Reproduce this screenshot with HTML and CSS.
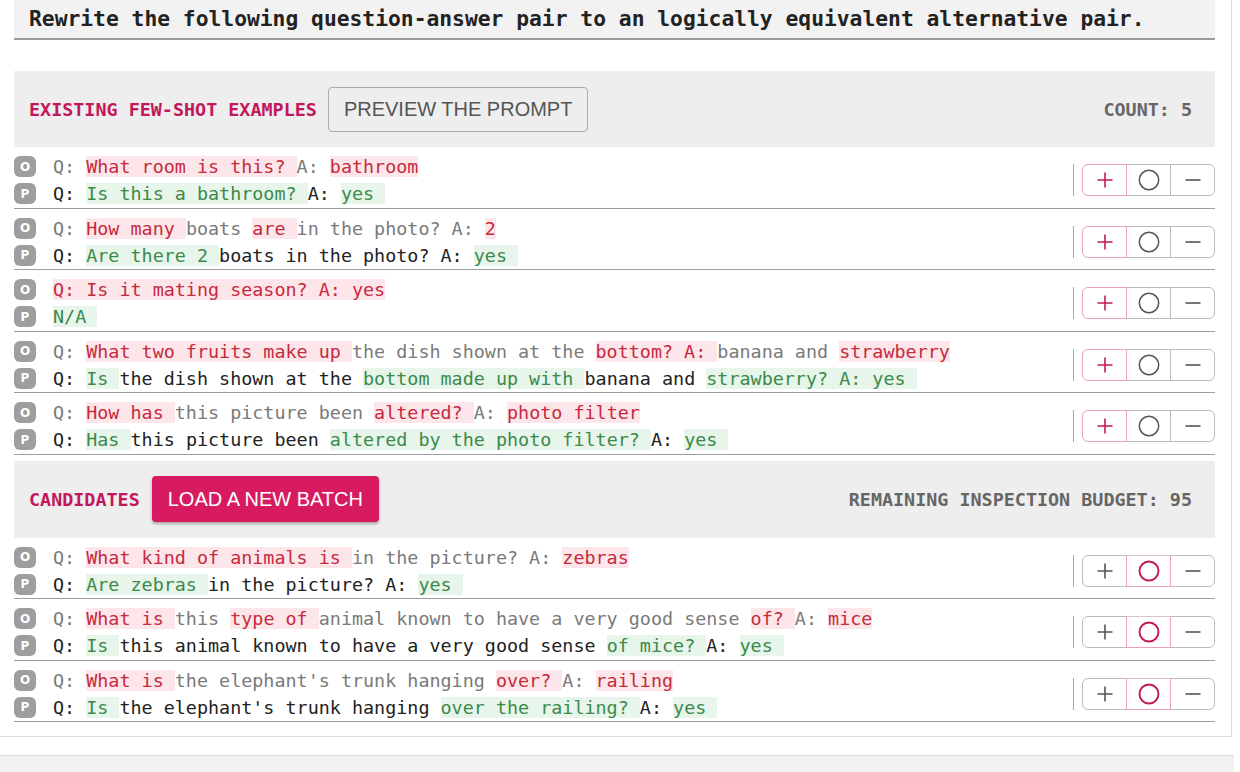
FILE: index.html
```html
<!DOCTYPE html>
<html>
<head>
<meta charset="utf-8">
<link rel="stylesheet" href="styles.css">
</head>
<body>
<div class="card">
  <div class="title">Rewrite the following question-answer pair to an logically equivalent alternative pair.</div>

  <div class="section-head">
    <span class="label">EXISTING FEW-SHOT EXAMPLES</span>
    <button class="btn-outline">PREVIEW THE PROMPT</button>
    <span class="count">COUNT: 5</span>
  </div>

  <div class="row">
    <div class="lines">
      <div class="line o"><span class="badge">O</span><span class="txt">Q: <span class="r">What room is this? </span>A: <span class="r">bathroom</span></span></div>
      <div class="line p"><span class="badge">P</span><span class="txt">Q: <span class="g">Is this a bathroom? </span>A: <span class="g">yes </span></span></div>
    </div>
    <div class="ctrl">
      <div class="seg on plus-on"><svg width="16" height="16" viewBox="0 0 16 16"><path d="M8 0.5V15.5M0.5 8H15.5" stroke="currentColor" stroke-width="1.6" fill="none"/></svg></div>
      <div class="seg"><svg width="22" height="22" viewBox="0 0 22 22"><circle cx="11" cy="11" r="9.7" stroke="currentColor" stroke-width="1.5" fill="none"/></svg></div>
      <div class="seg"><svg width="16" height="16" viewBox="0 0 16 16"><path d="M0.5 8H15.5" stroke="currentColor" stroke-width="1.6" fill="none"/></svg></div>
    </div>
  </div>

  <div class="row">
    <div class="lines">
      <div class="line o"><span class="badge">O</span><span class="txt">Q: <span class="r">How many </span>boats <span class="r">are </span>in the photo? A: <span class="r">2</span></span></div>
      <div class="line p"><span class="badge">P</span><span class="txt">Q: <span class="g">Are there 2 </span>boats in the photo? A: <span class="g">yes </span></span></div>
    </div>
    <div class="ctrl">
      <div class="seg on plus-on"><svg width="16" height="16" viewBox="0 0 16 16"><path d="M8 0.5V15.5M0.5 8H15.5" stroke="currentColor" stroke-width="1.6" fill="none"/></svg></div>
      <div class="seg"><svg width="22" height="22" viewBox="0 0 22 22"><circle cx="11" cy="11" r="9.7" stroke="currentColor" stroke-width="1.5" fill="none"/></svg></div>
      <div class="seg"><svg width="16" height="16" viewBox="0 0 16 16"><path d="M0.5 8H15.5" stroke="currentColor" stroke-width="1.6" fill="none"/></svg></div>
    </div>
  </div>

  <div class="row">
    <div class="lines">
      <div class="line o"><span class="badge">O</span><span class="txt"><span class="r">Q: Is it mating season? A: yes</span></span></div>
      <div class="line p"><span class="badge">P</span><span class="txt"><span class="g">N/A </span></span></div>
    </div>
    <div class="ctrl">
      <div class="seg on plus-on"><svg width="16" height="16" viewBox="0 0 16 16"><path d="M8 0.5V15.5M0.5 8H15.5" stroke="currentColor" stroke-width="1.6" fill="none"/></svg></div>
      <div class="seg"><svg width="22" height="22" viewBox="0 0 22 22"><circle cx="11" cy="11" r="9.7" stroke="currentColor" stroke-width="1.5" fill="none"/></svg></div>
      <div class="seg"><svg width="16" height="16" viewBox="0 0 16 16"><path d="M0.5 8H15.5" stroke="currentColor" stroke-width="1.6" fill="none"/></svg></div>
    </div>
  </div>

  <div class="row">
    <div class="lines">
      <div class="line o"><span class="badge">O</span><span class="txt">Q: <span class="r">What two fruits make up </span>the dish shown at the <span class="r">bottom? A: </span>banana and <span class="r">strawberry</span></span></div>
      <div class="line p"><span class="badge">P</span><span class="txt">Q: <span class="g">Is </span>the dish shown at the <span class="g">bottom made up with </span>banana and <span class="g">strawberry? A: yes </span></span></div>
    </div>
    <div class="ctrl">
      <div class="seg on plus-on"><svg width="16" height="16" viewBox="0 0 16 16"><path d="M8 0.5V15.5M0.5 8H15.5" stroke="currentColor" stroke-width="1.6" fill="none"/></svg></div>
      <div class="seg"><svg width="22" height="22" viewBox="0 0 22 22"><circle cx="11" cy="11" r="9.7" stroke="currentColor" stroke-width="1.5" fill="none"/></svg></div>
      <div class="seg"><svg width="16" height="16" viewBox="0 0 16 16"><path d="M0.5 8H15.5" stroke="currentColor" stroke-width="1.6" fill="none"/></svg></div>
    </div>
  </div>

  <div class="row">
    <div class="lines">
      <div class="line o"><span class="badge">O</span><span class="txt">Q: <span class="r">How has </span>this picture been <span class="r">altered? </span>A: <span class="r">photo filter</span></span></div>
      <div class="line p"><span class="badge">P</span><span class="txt">Q: <span class="g">Has </span>this picture been <span class="g">altered by the photo filter? </span>A: <span class="g">yes </span></span></div>
    </div>
    <div class="ctrl">
      <div class="seg on plus-on"><svg width="16" height="16" viewBox="0 0 16 16"><path d="M8 0.5V15.5M0.5 8H15.5" stroke="currentColor" stroke-width="1.6" fill="none"/></svg></div>
      <div class="seg"><svg width="22" height="22" viewBox="0 0 22 22"><circle cx="11" cy="11" r="9.7" stroke="currentColor" stroke-width="1.5" fill="none"/></svg></div>
      <div class="seg"><svg width="16" height="16" viewBox="0 0 16 16"><path d="M0.5 8H15.5" stroke="currentColor" stroke-width="1.6" fill="none"/></svg></div>
    </div>
  </div>

  <div class="section-head cand">
    <span class="label">CANDIDATES</span>
    <button class="btn-primary">LOAD A NEW BATCH</button>
    <span class="count">REMAINING INSPECTION BUDGET: 95</span>
  </div>

  <div class="row">
    <div class="lines">
      <div class="line o"><span class="badge">O</span><span class="txt">Q: <span class="r">What kind of animals is </span>in the picture? A: <span class="r">zebras</span></span></div>
      <div class="line p"><span class="badge">P</span><span class="txt">Q: <span class="g">Are zebras </span>in the picture? A: <span class="g">yes </span></span></div>
    </div>
    <div class="ctrl">
      <div class="seg"><svg width="16" height="16" viewBox="0 0 16 16"><path d="M8 0.5V15.5M0.5 8H15.5" stroke="currentColor" stroke-width="1.6" fill="none"/></svg></div>
      <div class="seg on circ-on"><svg width="22" height="22" viewBox="0 0 22 22"><circle cx="11" cy="11" r="9.5" stroke="currentColor" stroke-width="1.9" fill="none"/></svg></div>
      <div class="seg"><svg width="16" height="16" viewBox="0 0 16 16"><path d="M0.5 8H15.5" stroke="currentColor" stroke-width="1.6" fill="none"/></svg></div>
    </div>
  </div>

  <div class="row">
    <div class="lines">
      <div class="line o"><span class="badge">O</span><span class="txt">Q: <span class="r">What is </span>this <span class="r">type of </span>animal known to have a very good sense <span class="r">of? </span>A: <span class="r">mice</span></span></div>
      <div class="line p"><span class="badge">P</span><span class="txt">Q: <span class="g">Is </span>this animal known to have a very good sense <span class="g">of mice? </span>A: <span class="g">yes </span></span></div>
    </div>
    <div class="ctrl">
      <div class="seg"><svg width="16" height="16" viewBox="0 0 16 16"><path d="M8 0.5V15.5M0.5 8H15.5" stroke="currentColor" stroke-width="1.6" fill="none"/></svg></div>
      <div class="seg on circ-on"><svg width="22" height="22" viewBox="0 0 22 22"><circle cx="11" cy="11" r="9.5" stroke="currentColor" stroke-width="1.9" fill="none"/></svg></div>
      <div class="seg"><svg width="16" height="16" viewBox="0 0 16 16"><path d="M0.5 8H15.5" stroke="currentColor" stroke-width="1.6" fill="none"/></svg></div>
    </div>
  </div>

  <div class="row">
    <div class="lines">
      <div class="line o"><span class="badge">O</span><span class="txt">Q: <span class="r">What is </span>the elephant's trunk hanging <span class="r">over? </span>A: <span class="r">railing</span></span></div>
      <div class="line p"><span class="badge">P</span><span class="txt">Q: <span class="g">Is </span>the elephant's trunk hanging <span class="g">over the railing? </span>A: <span class="g">yes </span></span></div>
    </div>
    <div class="ctrl">
      <div class="seg"><svg width="16" height="16" viewBox="0 0 16 16"><path d="M8 0.5V15.5M0.5 8H15.5" stroke="currentColor" stroke-width="1.6" fill="none"/></svg></div>
      <div class="seg on circ-on"><svg width="22" height="22" viewBox="0 0 22 22"><circle cx="11" cy="11" r="9.5" stroke="currentColor" stroke-width="1.9" fill="none"/></svg></div>
      <div class="seg"><svg width="16" height="16" viewBox="0 0 16 16"><path d="M0.5 8H15.5" stroke="currentColor" stroke-width="1.6" fill="none"/></svg></div>
    </div>
  </div>
</div>
<div class="footer"></div>
</body>
</html>
```

FILE: styles.css
```css
html, body {
  margin: 0;
  padding: 0;
  background: #ffffff;
}
body {
  font-family: "DejaVu Sans Mono", "Liberation Mono", monospace;
  color: #222;
  overflow: hidden;
}
.card {
  width: 1232px;
  box-sizing: border-box;
  border-right: 1px solid #dddddd;
  border-bottom: 1px solid #dddddd;
  padding: 0 16px 14px 14px;
}
.title {
  height: 40px;
  box-sizing: border-box;
  background: #f2f2f2;
  border-bottom: 2px solid #9a9a9a;
  padding-left: 15px;
  font-weight: bold;
  font-size: 21.3px;
  line-height: 38px;
  color: #222;
  white-space: nowrap;
}
.section-head {
  margin-top: 31px;
  height: 76px;
  background: #eeeeee;
  display: flex;
  align-items: center;
  padding: 0 23px 0 15px;
}
.section-head.cand {
  margin-top: 6px;
  height: 77px;
}
.label {
  color: #c2185b;
  font-weight: bold;
  font-size: 18.4px;
  margin-right: 11px;
}
.cand .label {
  margin-right: 12px;
}
.count {
  margin-left: auto;
  color: #666666;
  font-weight: bold;
  font-size: 18.4px;
}
.btn-outline {
  font-family: "Liberation Sans", Arial, sans-serif;
  font-size: 20px;
  color: #555555;
  background: transparent;
  border: 1px solid #aaaaaa;
  border-radius: 4px;
  height: 45px;
  padding: 0 15px;
  margin-top: 1px;
}
.btn-primary {
  font-family: "Liberation Sans", Arial, sans-serif;
  font-size: 20px;
  color: #ffffff;
  background: #d81b60;
  border: none;
  border-radius: 4px;
  height: 46px;
  padding: 0 16px;
  box-shadow: 0 2px 3px rgba(0, 0, 0, 0.3);
}
.row {
  display: flex;
  align-items: center;
  padding: 6px 0 0.5px;
  border-bottom: 1px solid #9e9e9e;
}
.lines {
  flex: 1;
}
.line {
  display: flex;
  align-items: center;
  height: 27px;
}
.badge {
  width: 22px;
  height: 21px;
  border-radius: 6px;
  background: #9e9e9e;
  color: #ffffff;
  font-family: "DejaVu Sans", sans-serif;
  font-weight: bold;
  font-size: 12px;
  display: flex;
  align-items: center;
  justify-content: center;
  margin-right: 17px;
  flex: none;
}
.txt {
  white-space: pre;
  font-size: 18.4px;
  line-height: 27px;
}
.o .txt {
  color: #7a7a7a;
}
.p .txt {
  color: #222222;
}
.r {
  color: #c62a3f;
  background: #fde6e9;
}
.g {
  color: #3b8a4a;
  background: #e7f5ea;
}
.ctrl {
  display: flex;
  align-items: center;
  border-left: 1px solid #aaaaaa;
  height: 32px;
  padding-left: 8px;
}
.seg {
  width: 45px;
  height: 32px;
  box-sizing: border-box;
  border: 1px solid #bbbbbb;
  display: flex;
  align-items: center;
  justify-content: center;
  background: #ffffff;
  color: #555555;
}
.seg + .seg {
  margin-left: -1px;
}
.seg:first-child {
  border-radius: 6px 0 0 6px;
}
.seg:last-child {
  border-radius: 0 6px 6px 0;
}
.seg.on {
  border-color: #eaa3b8;
  position: relative;
  z-index: 1;
  color: #c2185b;
}
.seg.circ-on {
  border-top-color: #d9c3ca;
}
.footer {
  margin-top: 18px;
  width: 1234px;
  height: 40px;
  background: #f2f2f2;
  border-top: 1px solid #dddddd;
}
```
